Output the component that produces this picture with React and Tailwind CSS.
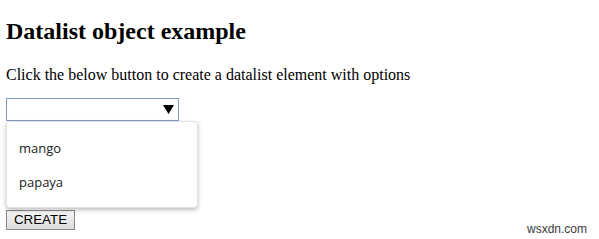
import React from 'react';

const App = () => {
  const options = ['mango', 'papaya'];

  return (
    <div className="relative w-[599px] h-[239px] bg-white overflow-hidden pl-[6px]">
      <h1 className="pt-[18px] text-[24px] leading-[27px] font-bold text-black font-['Liberation_Serif',serif]">
        Datalist object example
      </h1>
      <p className="mt-[21px] text-[16px] leading-[18px] text-black font-['Liberation_Serif',serif]">
        Click the below button to create a datalist element with options
      </p>

      <div className="relative mt-[14px] w-[173px]">
        <div className="h-[23px] w-[173px] border border-[#7d9cc4] bg-white flex items-center justify-end pr-[4px]">
          <svg width="11" height="9" viewBox="0 0 11 9">
            <path d="M0 0 H11 L5.5 9 Z" fill="#000" />
          </svg>
        </div>

        {/* open datalist popup */}
        <div className="absolute left-0 top-[23px] z-10 w-[192px] h-[87px] bg-white rounded-[4px] border border-[#e3e3e3] shadow-[0_2px_4px_rgba(0,0,0,0.25)] pt-[16px] font-['Open_Sans',sans-serif] text-[13px] text-[#222]">
          {options.map((o) => (
            <div key={o} className="h-[34px] pl-[12px] leading-[20px]">
              {o}
            </div>
          ))}
        </div>
      </div>

      <button className="mt-[89px] h-[20px] w-[69px] border border-[#8a8a8a] bg-gradient-to-b from-[#f5f5f5] to-[#dcdcdc] text-[13.33px] leading-[18px] text-black font-['Liberation_Sans',Arial,sans-serif]">
        CREATE
      </button>

      <span className="absolute left-[527px] top-[222px] text-[12px] leading-[14px] text-[#3a3a3a] font-['Liberation_Sans',Arial,sans-serif]">
        wsxdn.com
      </span>
    </div>
  );
};

export default App;
